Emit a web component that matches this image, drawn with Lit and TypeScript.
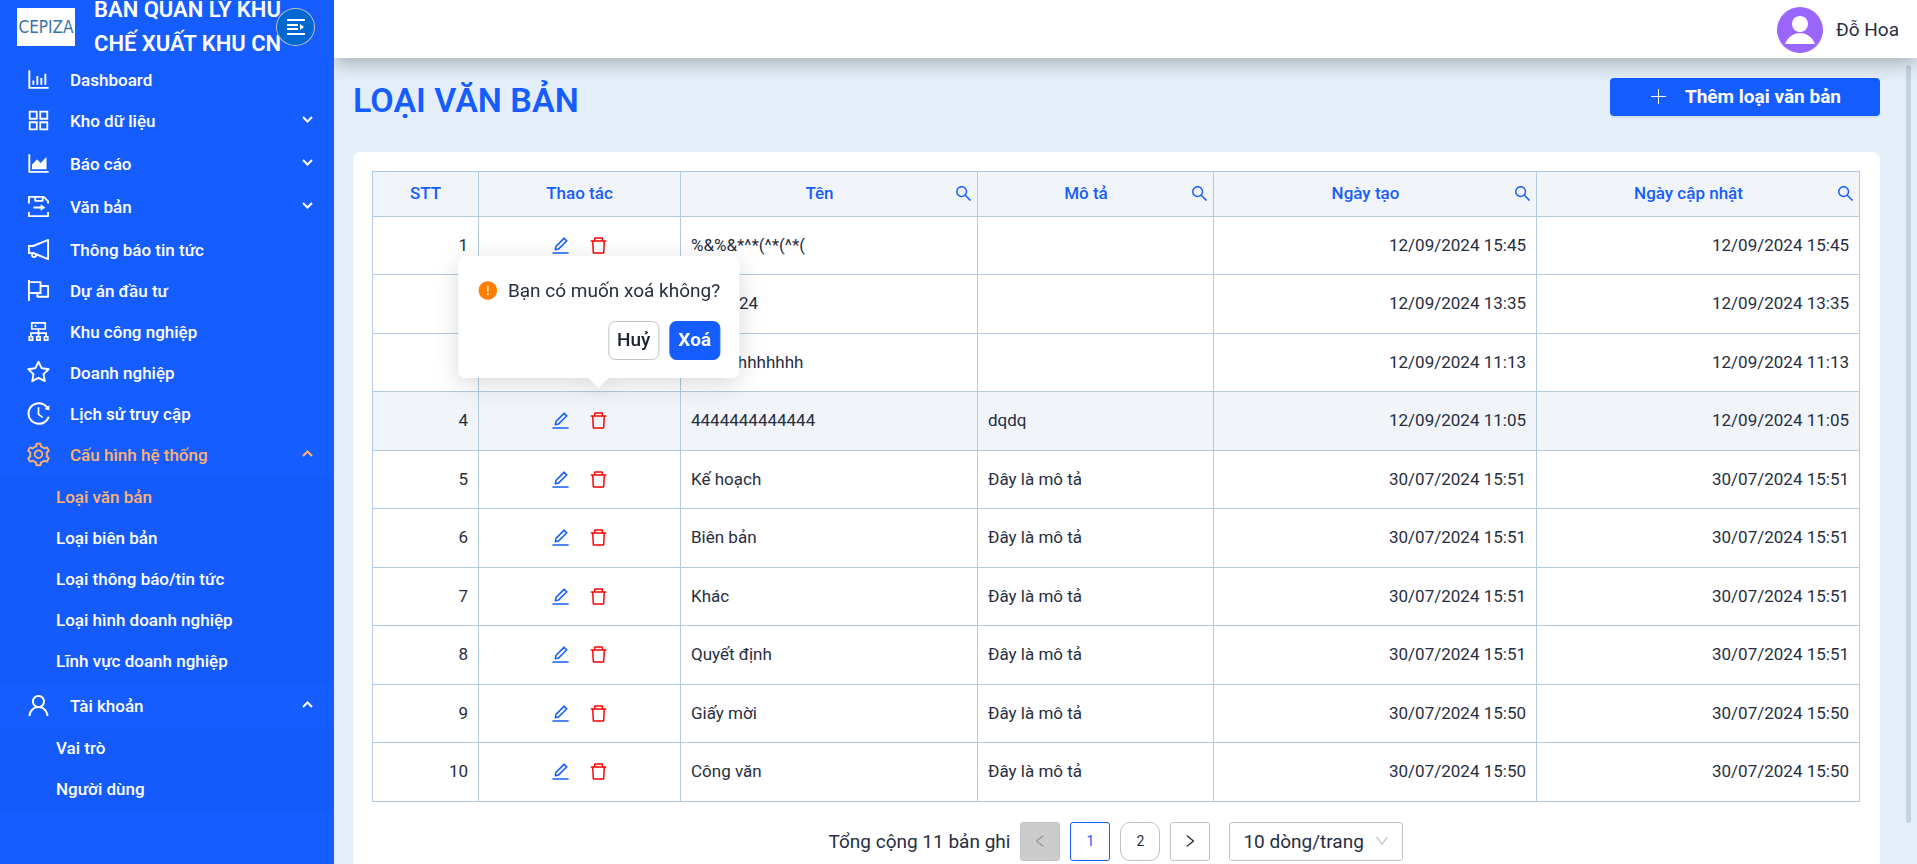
import { LitElement, html, css } from "lit";
import { customElement, property, state } from "lit/decorators.js";
import { classMap } from "lit/directives/class-map.js";

const PATHS: Record<string, string> = {
  bar: "M888 792H200V168c0-4.4-3.6-8-8-8h-56c-4.4 0-8 3.6-8 8v688c0 4.4 3.6 8 8 8h752c4.4 0 8-3.6 8-8v-56c0-4.4-3.6-8-8-8zm-600-80h56c4.4 0 8-3.6 8-8V560c0-4.4-3.6-8-8-8h-56c-4.4 0-8 3.6-8 8v144c0 4.4 3.6 8 8 8zm152 0h56c4.4 0 8-3.6 8-8V384c0-4.4-3.6-8-8-8h-56c-4.4 0-8 3.6-8 8v320c0 4.4 3.6 8 8 8zm152 0h56c4.4 0 8-3.6 8-8V462c0-4.4-3.6-8-8-8h-56c-4.4 0-8 3.6-8 8v242c0 4.4 3.6 8 8 8zm152 0h56c4.4 0 8-3.6 8-8V304c0-4.4-3.6-8-8-8h-56c-4.4 0-8 3.6-8 8v400c0 4.4 3.6 8 8 8z",
  apps: "M464 144H160c-8.8 0-16 7.2-16 16v304c0 8.8 7.2 16 16 16h304c8.8 0 16-7.2 16-16V160c0-8.8-7.2-16-16-16zm-52 268H212V212h200v200zm452-268H560c-8.8 0-16 7.2-16 16v304c0 8.8 7.2 16 16 16h304c8.8 0 16-7.2 16-16V160c0-8.8-7.2-16-16-16zm-52 268H612V212h200v200zM464 544H160c-8.8 0-16 7.2-16 16v304c0 8.8 7.2 16 16 16h304c8.8 0 16-7.2 16-16V560c0-8.8-7.2-16-16-16zm-52 268H212V612h200v200zm452-268H560c-8.8 0-16 7.2-16 16v304c0 8.8 7.2 16 16 16h304c8.8 0 16-7.2 16-16V560c0-8.8-7.2-16-16-16zm-52 268H612V612h200v200z",
  area: "M888 792H200V168c0-4.4-3.6-8-8-8h-56c-4.4 0-8 3.6-8 8v688c0 4.4 3.6 8 8 8h752c4.4 0 8-3.6 8-8v-56c0-4.4-3.6-8-8-8zm-616-64h536c4.4 0 8-3.6 8-8V284c0-7.2-8.7-10.7-13.7-5.7L592 488.6l-125.4-124a8.03 8.03 0 00-11.3 0l-189 189.6a7.87 7.87 0 00-2.3 5.6V720c0 4.4 3.6 8 8 8z",
  doc: "M112 400V144c0-18 14-32 32-32h576l192 192v96h-72v-64L704 184v120c0 18-14 32-32 32H384c-18 0-32-14-32-32V184H184v216zM424 184v80h208v-80zM112 720h72v120h656V720h72v160c0 18-14 32-32 32H144c-18 0-32-14-32-32zM320 512h272v-88l176 124-176 124v-88H320z",
  notice: "M880 112c-3.8 0-7.7.7-11.6 2.3L292 345.9H128c-8.8 0-16 7.4-16 16.6v299c0 9.2 7.2 16.6 16 16.6h101.7c-3.7 11.6-5.7 23.9-5.7 36.4 0 65.9 53.8 119.5 120 119.5 55.4 0 102.1-37.6 115.9-88.4l408.6 164.2c3.9 1.5 7.8 2.3 11.6 2.3 16.9 0 32-14.2 32-33.2V145.2C912 126.2 897 112 880 112zM344 762.3c-26.5 0-48-21.4-48-47.8 0-11.2 3.9-21.9 11-30.4l84.9 34.1c-2 24.6-22.7 44.1-47.9 44.1zm496 58.4L318.8 611.3l-12.9-5.2H184V417.9h121.9l12.9-5.2L840 203.3v617.4z",
  flag: "M880 305H624V192c0-17.7-14.3-32-32-32H184v-40c0-4.4-3.6-8-8-8h-56c-4.4 0-8 3.6-8 8v784c0 4.4 3.6 8 8 8h56c4.4 0 8-3.6 8-8V640h248v113c0 17.7 14.3 32 32 32h416c17.7 0 32-14.3 32-32V337c0-17.7-14.3-32-32-32zM184 568V232h368v336H184zm656 145H504v-73h112c4.4 0 8-3.6 8-8V377h216v336z",
  cluster: "M888 680h-54V540H546v-92h238c8.8 0 16-7.2 16-16V168c0-8.8-7.2-16-16-16H240c-8.8 0-16 7.2-16 16v264c0 8.8 7.2 16 16 16h238v92H190v140h-54c-4.4 0-8 3.6-8 8v176c0 4.4 3.6 8 8 8h176c4.4 0 8-3.6 8-8V688c0-4.4-3.6-8-8-8h-54v-72h220v72h-54c-4.4 0-8 3.6-8 8v176c0 4.4 3.6 8 8 8h176c4.4 0 8-3.6 8-8V688c0-4.4-3.6-8-8-8h-54v-72h220v72h-54c-4.4 0-8 3.6-8 8v176c0 4.4 3.6 8 8 8h176c4.4 0 8-3.6 8-8V688c0-4.4-3.6-8-8-8zM256 805.3c0 1.5-1.2 2.7-2.7 2.7h-58.7c-1.5 0-2.7-1.2-2.7-2.7v-58.7c0-1.5 1.2-2.7 2.7-2.7h58.7c1.5 0 2.7 1.2 2.7 2.7v58.7zm288 0c0 1.5-1.2 2.7-2.7 2.7h-58.7c-1.5 0-2.7-1.2-2.7-2.7v-58.7c0-1.5 1.2-2.7 2.7-2.7h58.7c1.5 0 2.7 1.2 2.7 2.7v58.7zM288 384V216h448v168H288zm544 421.3c0 1.5-1.2 2.7-2.7 2.7h-58.7c-1.5 0-2.7-1.2-2.7-2.7v-58.7c0-1.5 1.2-2.7 2.7-2.7h58.7c1.5 0 2.7 1.2 2.7 2.7v58.7zM360 300a40 40 0 1080 0 40 40 0 10-80 0z",
  star: "M908.1 353.1l-253.9-36.9L540.7 86.1c-3.1-6.3-8.2-11.4-14.5-14.5-15.8-7.8-35-1.3-42.9 14.5L369.8 316.2l-253.9 36.9c-7 1-13.4 4.3-18.3 9.3a32.05 32.05 0 00.6 45.3l183.7 179.1-43.4 252.9a31.95 31.95 0 0046.4 33.7L512 754l227.1 119.4c6.2 3.3 13.4 4.4 20.3 3.2 17.4-3 29.1-19.5 26.1-36.9l-43.4-252.9 183.7-179.1c5-4.9 8.3-11.3 9.3-18.3 2.7-17.5-9.5-33.7-27-36.3zM664.8 561.6l36.1 210.3L512 672.7 323.1 772l36.1-210.3-152.8-149L417.6 382 512 190.7 606.4 382l211.2 30.7-152.8 148.9z",
  history: "M536.1 273H488c-4.4 0-8 3.6-8 8v275.3c0 2.6 1.2 5 3.3 6.5l165.3 120.7c3.6 2.6 8.6 1.9 11.2-1.7l28.6-39c2.7-3.7 1.9-8.7-1.7-11.2L544.1 528.5V281c0-4.4-3.6-8-8-8zm219.8 75.2l156.8 38.3c5 1.2 9.9-2.6 9.9-7.7l.8-161.5c0-6.7-7.7-10.5-12.9-6.3L752.9 334.1a8 8 0 003 14.1zm167.7 301.1l-56.7-19.5a8 8 0 00-10.1 4.8c-1.9 5.1-3.9 10.1-6 15.1-17.8 42.1-43.3 80-75.9 112.5a353 353 0 01-112.5 75.9 352.18 352.18 0 01-137.7 27.8c-47.8 0-94.1-9.3-137.7-27.8a353 353 0 01-112.5-75.9c-32.5-32.5-58-70.4-75.9-112.5A353.44 353.44 0 01171 512c0-47.8 9.3-94.2 27.8-137.8 17.8-42.1 43.3-80 75.9-112.5a353 353 0 01112.5-75.9C430.6 167.3 477 158 524.8 158s94.1 9.3 137.7 27.8A353 353 0 01775 261.7c10.2 10.3 19.8 21 28.6 32.3l59.8-46.8C784.7 146.6 662.2 81.9 524.6 82 285 82.1 92.6 276.7 95 516.4 97.4 751.9 288.9 942 524.8 942c185.5 0 343.5-117.6 403.7-282.3 1.5-4.2-.7-8.9-4.9-10.4z",
  setting: "M924.8 625.7l-65.5-56c3.1-19 4.7-38.4 4.7-57.8s-1.6-38.8-4.7-57.8l65.5-56a32.03 32.03 0 009.3-35.2l-.9-2.6a443.74 443.74 0 00-79.7-137.9l-1.8-2.1a32.12 32.12 0 00-35.1-9.5l-81.3 28.9c-30-24.6-63.5-44-99.7-57.6l-15.7-85a32.05 32.05 0 00-25.8-25.7l-2.7-.5c-52.1-9.4-106.9-9.4-159 0l-2.7.5a32.05 32.05 0 00-25.8 25.7l-15.8 85.4a351.86 351.86 0 00-99 57.4l-81.9-29.1a32 32 0 00-35.1 9.5l-1.8 2.1a446.02 446.02 0 00-79.7 137.9l-.9 2.6c-4.5 12.5-.8 26.5 9.3 35.2l66.3 56.6c-3.1 18.8-4.6 38-4.6 57.1 0 19.2 1.5 38.4 4.6 57.1L99 625.5a32.03 32.03 0 00-9.3 35.2l.9 2.6c18.1 50.4 44.9 96.9 79.7 137.9l1.8 2.1a32.12 32.12 0 0035.1 9.5l81.9-29.1c29.8 24.5 63.1 43.9 99 57.4l15.8 85.4a32.05 32.05 0 0025.8 25.7l2.7.5a449.4 449.4 0 00159 0l2.7-.5a32.05 32.05 0 0025.8-25.7l15.7-85a350 350 0 0099.7-57.6l81.3 28.9a32 32 0 0035.1-9.5l1.8-2.1c34.8-41.1 61.6-87.5 79.7-137.9l.9-2.6c4.5-12.3.8-26.3-9.3-35zM788.3 465.9c2.5 15.1 3.8 30.6 3.8 46.1s-1.3 31-3.8 46.1l-6.6 40.1 74.7 63.9a370.03 370.03 0 01-42.6 73.6L721 702.8l-31.4 25.8c-23.9 19.6-50.5 35-79.3 45.8l-38.1 14.3-17.9 97a377.5 377.5 0 01-85 0l-17.9-97.2-37.8-14.5c-28.5-10.8-55-26.2-78.7-45.7l-31.4-25.9-93.4 33.2c-17-22.9-31.2-47.6-42.6-73.6l75.5-64.5-6.5-40c-2.4-14.9-3.7-30.3-3.7-45.5 0-15.3 1.2-30.6 3.7-45.5l6.5-40-75.5-64.5c11.3-26.1 25.6-50.7 42.6-73.6l93.4 33.2 31.4-25.9c23.7-19.5 50.2-34.9 78.7-45.7l37.9-14.3 17.9-97.2c28.1-3.2 56.8-3.2 85 0l17.9 97 38.1 14.3c28.7 10.8 55.4 26.2 79.3 45.8l31.4 25.8 92.8-32.9c17 22.9 31.2 47.6 42.6 73.6L781.8 426l6.5 39.9zM512 326c-97.2 0-176 78.8-176 176s78.8 176 176 176 176-78.8 176-176-78.8-176-176-176zm79.2 255.2A111.6 111.6 0 01512 614c-29.9 0-58-11.7-79.2-32.8A111.6 111.6 0 01400 502c0-29.9 11.7-58 32.8-79.2C454 401.6 482.1 390 512 390c29.9 0 58 11.6 79.2 32.8A111.6 111.6 0 01624 502c0 29.9-11.7 58-32.8 79.2z",
  user: "M858.5 763.6a374 374 0 00-80.6-119.5 375.63 375.63 0 00-119.5-80.6c-.4-.2-.8-.3-1.2-.5C719.5 518 760 444.7 760 362c0-137-111-248-248-248S264 225 264 362c0 82.7 40.5 156 102.8 201.1-.4.2-.8.3-1.2.5-44.8 18.9-85 46-119.5 80.6a375.63 375.63 0 00-80.6 119.5A371.7 371.7 0 00136 901.8a8 8 0 008 8.2h60c4.4 0 7.9-3.5 8-7.8 2-77.2 33-149.5 87.8-204.3 56.7-56.7 132-87.9 212.2-87.9s155.5 31.2 212.2 87.9C779 752.7 810 825 812 902.2c.1 4.4 3.6 7.8 8 7.8h60a8 8 0 008-8.2c-1-47.8-10.9-94.3-29.5-138.2zM512 534c-45.9 0-89.1-17.9-121.6-50.4S340 407.9 340 362c0-45.9 17.9-89.1 50.4-121.6S466.1 190 512 190s89.1 17.9 121.6 50.4S684 316.1 684 362c0 45.9-17.9 89.1-50.4 121.6S557.9 534 512 534z",
  edit: "M257.7 752c2 0 4-.2 6-.5L431.9 722c2-.4 3.9-1.3 5.3-2.8l423.9-423.9a9.96 9.96 0 000-14.1L694.9 114.9c-1.9-1.9-4.4-2.9-7.1-2.9s-5.2 1-7.1 2.9L256.8 538.8c-1.5 1.5-2.4 3.3-2.8 5.3l-29.5 168.2a33.5 33.5 0 009.4 29.8c6.6 6.4 14.9 9.9 23.8 9.9zm67.4-174.4L687.8 215l73.3 73.3-362.7 362.6-88.9 15.7 15.6-89zM880 836H144c-17.7 0-32 14.3-32 32v36c0 4.4 3.6 8 8 8h784c4.4 0 8-3.6 8-8v-36c0-17.7-14.3-32-32-32z",
  trash: "M360 184h-8c4.4 0 8-3.6 8-8v8h304v-8c0 4.4 3.6 8 8 8h-8v72h72v-80c0-35.3-28.7-64-64-64H352c-35.3 0-64 28.7-64 64v80h72v-72zm504 72H160c-17.7 0-32 14.3-32 32v32c0 4.4 3.6 8 8 8h60.4l24.7 523c1.6 34.1 29.8 61 63.9 61h454c34.2 0 62.3-26.8 63.9-61l24.7-523H888c4.4 0 8-3.6 8-8v-32c0-17.7-14.3-32-32-32zM731.3 840H292.7l-24.2-512h487l-24.2 512z",
  search: "M909.6 854.5L649.9 594.8C690.2 542.7 712 479 712 412c0-80.2-31.3-155.4-87.9-212.1-56.6-56.7-132-87.9-212.1-87.9s-155.5 31.3-212.1 87.9C143.2 256.5 112 331.8 112 412c0 80.1 31.3 155.5 87.9 212.1C256.5 680.8 331.8 712 412 712c67 0 130.6-21.8 182.7-62l259.7 259.6a8.2 8.2 0 0011.6 0l43.6-43.5a8.2 8.2 0 000-11.6zM570.4 570.4C528 612.7 471.8 636 412 636s-116-23.3-158.4-65.6C211.3 528 188 471.8 188 412s23.3-116.1 65.6-158.4C296 211.3 352.2 188 412 188s116.1 23.2 158.4 65.6S636 352.2 636 412s-23.3 116.1-65.6 158.4z",
  plus: "M485 108h54v808h-54zM108 485h808v54H108z",
  warn: "M512 64C264.600 64 64 264.600 64 512s200.600 448 448 448 448-200.600 448-448S759.400 64 512 64zm-32 232c0-4.400 3.600-8 8-8h48c4.400 0 8 3.600 8 8v272c0 4.400-3.600 8-8 8h-48c-4.400 0-8-3.600-8-8V296zm32 440a48 48 0 010-96 48 48 0 010 96z",
  down: "M884 256h-75c-5.100 0-9.900 2.500-12.900 6.600L512 654.200 227.900 262.600c-3-4.100-7.800-6.600-12.900-6.600h-75c-6.500 0-10.300 7.400-6.500 12.700l352.600 486.100c12.800 17.600 39 17.600 51.700 0l352.600-486.100c3.900-5.300.1-12.700-6.400-12.700z",
  left: "M724 218.300V141c0-6.700-7.700-10.400-12.900-6.300L260.300 486.800a31.860 31.860 0 000 50.300l450.800 352.100c5.300 4.100 12.900.4 12.900-6.300v-77.300c0-4.900-2.300-9.600-6.100-12.600l-360-281 360-281.100c3.800-3 6.100-7.700 6.100-12.600z",
  right: "M765.700 486.800L314.900 134.700A7.970 7.970 0 00302 141v77.300c0 4.900 2.300 9.600 6.100 12.600l360 281.100-360 281.100c-3.900 3-6.100 7.700-6.100 12.600V883c0 6.700 7.700 10.400 12.900 6.300l450.800-352.100a31.960 31.960 0 000-50.400z",
};

@customElement("ui-icon")
class UiIcon extends LitElement {
  @property() name = "";
  @property({ type: Number }) size = 20;
  static styles = css`
    :host {
      display: inline-flex;
      flex: none;
    }
    svg {
      display: block;
      fill: currentColor;
    }
  `;
  render() {
    return html`<svg width=${this.size} height=${this.size} viewBox="0 0 1024 1024" aria-hidden="true">
      <path fill-rule=${this.name === "plus" ? "nonzero" : "evenodd"} d=${PATHS[this.name] ?? ""}></path>
    </svg>`;
  }
}

interface NavItem {
  label: string;
  icon: string;
  expandable?: boolean;
  active?: boolean;
  children?: string[];
}

const NAV: NavItem[] = [
  { label: "Dashboard", icon: "bar" },
  { label: "Kho dữ liệu", icon: "apps", expandable: true },
  { label: "Báo cáo", icon: "area", expandable: true },
  { label: "Văn bản", icon: "doc", expandable: true },
  { label: "Thông báo tin tức", icon: "notice" },
  { label: "Dự án đầu tư", icon: "flag" },
  { label: "Khu công nghiệp", icon: "cluster" },
  { label: "Doanh nghiệp", icon: "star" },
  { label: "Lịch sử truy cập", icon: "history" },
  {
    label: "Cấu hình hệ thống",
    icon: "setting",
    expandable: true,
    active: true,
    children: ["Loại văn bản", "Loại biên bản", "Loại thông báo/tin tức", "Loại hình doanh nghiệp", "Lĩnh vực doanh nghiệp"],
  },
  { label: "Tài khoản", icon: "user", expandable: true, children: ["Vai trò", "Người dùng"] },
];

@customElement("side-nav")
class SideNav extends LitElement {
  static styles = css`
    :host {
      display: flex;
      flex-direction: column;
      width: 334px;
      flex: none;
      background: #165dff;
      color: #fff;
      overflow: hidden;
    }
    .brand {
      display: flex;
      align-items: center;
      height: 54px;
      padding-left: 17px;
      flex: none;
      position: relative;
    }
    .logo {
      display: block;
      flex: none;
      background: #fff;
    }
    .logo text {
      font: 17px "Liberation Sans Narrow", "DejaVu Sans Condensed", sans-serif;
      fill: #3b72a6;
    }
    .name {
      margin: 0 0 0 19px;
      font-size: 22px;
      font-weight: 600;
      line-height: 34px;
      white-space: nowrap;
    }
    .toggle {
      position: absolute;
      right: 19px;
      top: 8px;
      width: 39px;
      height: 38px;
      padding: 0;
      display: grid;
      place-items: center;
      border: 1px solid #b9bec6;
      border-radius: 50%;
      background: #0068d0;
      color: #fff;
    }
    ul {
      list-style: none;
      margin: 0;
      padding: 0;
    }
    .menu {
      padding-top: 5px;
    }
    .item {
      display: flex;
      align-items: center;
      width: 100%;
      height: 41px;
      box-sizing: border-box;
      padding: 0 21px 0 25px;
      border: 0;
      background: none;
      color: inherit;
      font: inherit;
      font-size: 17px;
      font-weight: 500;
      text-align: left;
      text-decoration: none;
    }
    .label {
      flex: 1;
      padding-left: 18px;
    }
    .expandable {
      margin-bottom: 2px;
    }
    .active {
      color: #ffb26b;
    }
    .sub {
      margin-top: -1px;
      background: #155bfb;
      padding-bottom: 4px;
    }
    .sub .item {
      padding-left: 56px;
    }
    .caret {
      fill: none;
      stroke: currentColor;
      stroke-width: 2;
      margin-bottom: 2px;
    }
  `;
  render() {
    return html`
      <div class="brand">
        <svg class="logo" width="58" height="38" role="img" aria-label="CEPIZA">
          <text x="29" y="25" text-anchor="middle">CEPIZA</text>
        </svg>
        <p class="name">BAN QUẢN LÝ KHU<br />CHẾ XUẤT KHU CN</p>
        <button class="toggle" aria-label="Thu gọn menu">
          <svg width="18" height="16" fill="none" stroke="currentColor" stroke-width="2">
            <path d="M0 1h18M0 6h11M0 10h11M0 15h18"></path>
            <path d="M13 5l4 3-4 3z" fill="currentColor" stroke="none"></path>
          </svg>
        </button>
      </div>
      <nav>
        <ul class="menu">
          ${NAV.map((n) => this.renderItem(n))}
        </ul>
      </nav>
    `;
  }
  private renderItem(n: NavItem) {
    const cls = classMap({ item: true, expandable: !!n.expandable, active: !!n.active });
    const inner = html`<ui-icon name=${n.icon} .size=${27}></ui-icon><span class="label">${n.label}</span>`;
    if (!n.expandable) return html`<li><a class=${cls} href="#">${inner}</a></li>`;
    const open = !!n.children;
    return html`<li>
      <button class=${cls} aria-expanded=${open}>
        ${inner}
        <svg class="caret" width="11" height="7"><path d=${open ? "M1 6l4.500-4.500 4.500 4.500" : "M1 1l4.500 4.500 4.500-4.500"}></path></svg>
      </button>
      ${open
        ? html`<ul class="sub">
            ${n.children!.map(
              (c) => html`<li><a class=${classMap({ item: true, active: c === "Loại văn bản" })} href="#">${c}</a></li>`
            )}
          </ul>`
        : ""}
    </li>`;
  }
}

interface Row {
  name: string;
  desc: string;
  created: string;
}

const ROWS: Row[] = [
  { name: "%&%&*^*(^*(^*(", desc: "", created: "12/09/2024 15:45" },
  { name: "test1324", desc: "", created: "12/09/2024 13:35" },
  { name: "hhhhhhhhhhhh", desc: "", created: "12/09/2024 11:13" },
  { name: "4444444444444", desc: "dqdq", created: "12/09/2024 11:05" },
  { name: "Kế hoạch", desc: "Đây là mô tả", created: "30/07/2024 15:51" },
  { name: "Biên bản", desc: "Đây là mô tả", created: "30/07/2024 15:51" },
  { name: "Khác", desc: "Đây là mô tả", created: "30/07/2024 15:51" },
  { name: "Quyết định", desc: "Đây là mô tả", created: "30/07/2024 15:51" },
  { name: "Giấy mời", desc: "Đây là mô tả", created: "30/07/2024 15:50" },
  { name: "Công văn", desc: "Đây là mô tả", created: "30/07/2024 15:50" },
];

@customElement("doc-type-table")
class DocTypeTable extends LitElement {
  @state() private confirmRow = 3;
  static styles = css`
    :host {
      display: block;
    }
    table {
      width: 100%;
      table-layout: fixed;
      border-collapse: collapse;
      font-size: 17px;
      line-height: 1.5;
    }
    .c-no { width: 106px; }
    .c-act { width: 202px; }
    .c-name { width: 297px; }
    .c-desc { width: 236px; }
    .c-date { width: 323px; }
    th,
    td {
      border: 1px solid #b0cbe2;
      padding: 16px 10px;
    }
    th {
      padding: 9px 4px;
      background: #f1f5fa;
      color: #165dff;
      font-weight: 500;
    }
    .head {
      display: flex;
      align-items: center;
    }
    .head span {
      flex: 1;
    }
    .find {
      display: flex;
      margin: 0;
      padding: 0;
      border: 0;
      background: none;
      color: inherit;
    }
    .num {
      text-align: right;
    }
    .selected {
      background: #f1f5fa;
    }
    .actions {
      display: flex;
      justify-content: center;
      align-items: center;
      gap: 17px;
    }
    .anchor {
      position: relative;
      display: flex;
    }
    .act {
      display: flex;
      padding: 0;
      border: 0;
      background: none;
      color: #165dff;
    }
    .del {
      color: #ff0000;
    }
    .pop {
      position: absolute;
      bottom: 53px;
      left: 50%;
      transform: translateX(-50%);
      z-index: 2;
      box-sizing: border-box;
      padding: 20px 19px 18px;
      border-radius: 7px;
      background: #fff;
      white-space: nowrap;
      filter: drop-shadow(0 6px 12px rgba(0, 0, 0, 0.15));
      font-size: 19px;
      line-height: 29px;
    }
    .pop::after {
      content: "";
      position: absolute;
      left: calc(50% - 10px);
      top: 100%;
      border: 10px solid transparent;
      border-top-color: #fff;
      border-bottom: 0;
    }
    .msg {
      display: flex;
      align-items: center;
      gap: 10px;
      margin: 0;
    }
    .msg ui-icon {
      color: #ff7d00;
    }
    .btns {
      display: flex;
      justify-content: flex-end;
      gap: 10px;
      margin-top: 16px;
    }
    .btn {
      height: 39px;
      padding: 0 8px 2px;
      border: 1px solid #bfc3ca;
      border-radius: 7px;
      background: #fff;
      color: #1d2333;
      font: inherit;
      font-weight: 500;
    }
    .primary {
      border-color: #165dff;
      background: #165dff;
      color: #fff;
      font-weight: 700;
    }
  `;
  render() {
    const th = (label: string, search = true) => html`<th scope="col">
      <div class="head">
        <span>${label}</span>
        ${search
          ? html`<button class="find" aria-label="Tìm theo ${label}"><ui-icon name="search" .size=${19}></ui-icon></button>`
          : ""}
      </div>
    </th>`;
    return html`<table>
      <colgroup>
        <col class="c-no" /><col class="c-act" /><col class="c-name" />
        <col class="c-desc" /><col class="c-date" /><col class="c-date" />
      </colgroup>
      <thead>
        <tr>
          ${th("STT", false)}${th("Thao tác", false)}${th("Tên")}${th("Mô tả")}${th("Ngày tạo")}${th("Ngày cập nhật")}
        </tr>
      </thead>
      <tbody>
        ${ROWS.map(
          (r, i) => html`<tr class=${classMap({ selected: i === this.confirmRow })}>
            <td class="num">${i + 1}</td>
            <td>
              <div class="actions">
                <button class="act" aria-label="Sửa"><ui-icon name="edit" .size=${21}></ui-icon></button>
                <div class="anchor">
                  <button class="act del" aria-label="Xoá" @click=${() => (this.confirmRow = i)}>
                    <ui-icon name="trash" .size=${21}></ui-icon>
                  </button>
                  ${i === this.confirmRow ? this.renderConfirm() : ""}
                </div>
              </div>
            </td>
            <td>${r.name}</td>
            <td>${r.desc}</td>
            <td class="num">${r.created}</td>
            <td class="num">${r.created}</td>
          </tr>`
        )}
      </tbody>
    </table>`;
  }
  private renderConfirm() {
    const close = () => (this.confirmRow = -1);
    return html`<div class="pop" role="dialog" aria-label="Xác nhận xoá">
      <p class="msg"><ui-icon name="warn" .size=${21}></ui-icon>Bạn có muốn xoá không?</p>
      <div class="btns">
        <button class="btn" @click=${close}>Huỷ</button>
        <button class="btn primary" @click=${close}>Xoá</button>
      </div>
    </div>`;
  }
}

@customElement("app-root")
class AppRoot extends LitElement {
  static styles = css`
    :host {
      display: flex;
      height: 100vh;
      overflow: hidden;
      background: #e4eef8;
      color: #272e3f;
      font-family: Roboto, "Liberation Sans", sans-serif;
      font-size: 19px;
    }
    .main {
      flex: 1;
      min-width: 0;
      display: flex;
      flex-direction: column;
    }
    .top {
      display: flex;
      justify-content: flex-end;
      align-items: center;
      gap: 13px;
      height: 58px;
      flex: none;
      padding: 0 18px;
      background: #fff;
      box-shadow: 0 4px 20px rgba(0, 0, 0, 0.3);
      clip-path: inset(0 0 -40px 0);
      position: relative;
    }
    .avatar {
      margin-top: 2px;
      display: block;
    }
    .body {
      flex: 1;
      min-height: 0;
      overflow: hidden;
      display: flex;
      align-items: flex-start;
      justify-content: space-between;
    }
    .content {
      flex: 1;
      min-width: 0;
      padding: 20px 26px 0 19px;
    }
    .track {
      width: 5px;
      margin: 7px 6px 0 0;
      height: 94%;
      border-radius: 3px;
      background: #c5d3e1;
    }
    .bar {
      display: flex;
      justify-content: space-between;
      align-items: flex-start;
      margin-bottom: 30px;
    }
    h1 {
      margin: 0;
      font-size: 34px;
      font-weight: 600;
      line-height: 44px;
      color: #165dff;
    }
    .add {
      display: flex;
      align-items: center;
      justify-content: center;
      gap: 17px;
      height: 38px;
      padding: 0 39px 2px;
      border: 0;
      border-radius: 4px;
      background: #165dff;
      box-shadow: 0 2px 0 rgba(5, 50, 120, 0.08);
      color: #fff;
      font: inherit;
      font-weight: 700;
    }
    .card {
      padding: 19px 20px 0 19px;
      border-radius: 7px;
      background: #fff;
    }
    .pager {
      display: flex;
      justify-content: center;
      align-items: center;
      gap: 10px;
      padding: 20px 0 24px;
    }
    .pg {
      width: 40px;
      height: 39px;
      padding: 0;
      display: grid;
      place-items: center;
      border: 1px solid #bfc3ca;
      border-radius: 3px;
      background: #fff;
      color: #272e3f;
      font: inherit;
      font-size: 14px;
    }
    .pg:disabled {
      background: #ccc;
      color: #999;
    }
    .round {
      border-radius: 10px;
    }
    .current {
      border-color: #165dff;
      color: #165dff;
    }
    .size {
      position: relative;
      display: flex;
      align-items: center;
      margin-left: 9px;
      color: #bfc3ca;
    }
    .size select {
      appearance: none;
      height: 39px;
      width: 174px;
      padding: 0 13px;
      border: 1px solid #bfc3ca;
      border-radius: 3px;
      background: #fff;
      color: #272e3f;
      font: inherit;
    }
    .size ui-icon {
      position: absolute;
      right: 13px;
      pointer-events: none;
    }
  `;
  render() {
    return html`
      <side-nav></side-nav>
      <div class="main">
        <header class="top">
          <svg class="avatar" width="46" height="46" viewBox="0 0 46 46" aria-hidden="true">
            <circle cx="23" cy="23" r="23" fill="#9a66ff"></circle>
            <circle cx="23" cy="17" r="8" fill="#fff"></circle>
            <path d="M8 37c3-7 8-11 15-11s12 4 15 11z" fill="#fff"></path>
          </svg>
          <span>Đỗ Hoa</span>
        </header>
        <div class="body">
          <main class="content">
            <div class="bar">
              <h1>LOẠI VĂN BẢN</h1>
              <button class="add"><ui-icon name="plus" .size=${19}></ui-icon>Thêm loại văn bản</button>
            </div>
            <section class="card">
              <doc-type-table></doc-type-table>
              <div class="pager">
                <span>Tổng cộng 11 bản ghi</span>
                <button class="pg" disabled aria-label="Trang trước"><ui-icon name="left" .size=${16}></ui-icon></button>
                <button class="pg current">1</button>
                <button class="pg round">2</button>
                <button class="pg" aria-label="Trang sau"><ui-icon name="right" .size=${16}></ui-icon></button>
                <div class="size">
                  <select aria-label="Số dòng mỗi trang">
                    <option>10 dòng/trang</option>
                  </select>
                  <ui-icon name="down" .size=${16}></ui-icon>
                </div>
              </div>
            </section>
          </main>
          <div class="track"></div>
        </div>
      </div>
    `;
  }
}
